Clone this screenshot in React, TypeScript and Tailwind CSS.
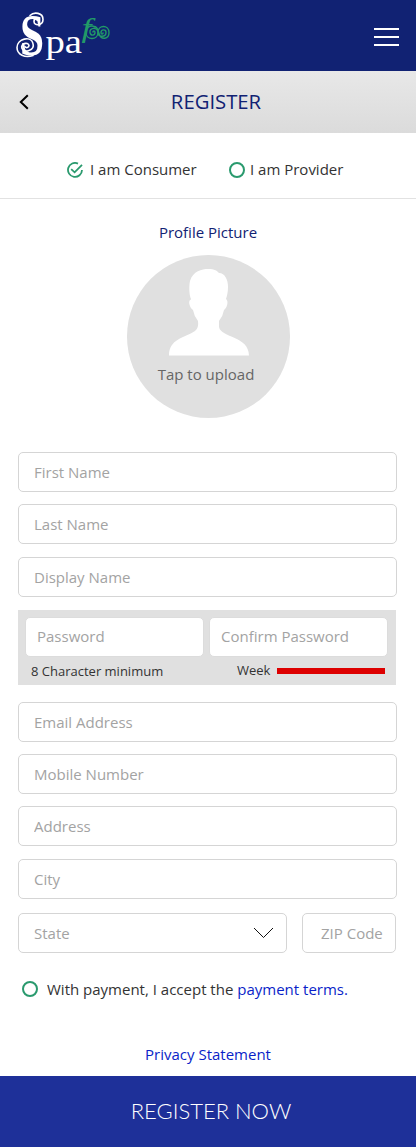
import { useState } from "react";

const FONT = "font-['Open_Sans','Noto_Sans',sans-serif]";

function Logo() {
  return (
    <svg width="100" height="71" viewBox="0 -10 100 71" role="img" aria-label="Spa foo">
      <g fill="#fff" fontFamily="'Liberation Serif', serif">
        <text x="0" y="0" fontSize="54" transform="translate(4 45) scale(0.8 1.1)" fontWeight="700">
          S
        </text>
        <text x="29.5" y="43" fontSize="34" textLength="36.5" lengthAdjust="spacingAndGlyphs">
          pa
        </text>
      </g>
      <g fill="none" stroke="#fff" strokeWidth="1.6" strokeLinecap="round">
        <path d="M14 5.500c4-4 13-3 13 4c0 6-9 7-9 2c0-4 5-4 5-1" />
        <path d="M17 45.500c-8 3-16-1-16-8c0-9 14-12 16-4c2 7-9 10-11 5c-2-5 6-7 7-3c0 2-3 3-4 1" />
      </g>
      <text x="65.500" y="27" fontSize="27" fontStyle="italic" fill="#229a68" fontFamily="'Liberation Serif', serif" textLength="10" lengthAdjust="spacingAndGlyphs">
        f
      </text>
      <g fill="none" stroke="#229a68" strokeWidth="1.4" strokeLinecap="round">
        <path d="M79 17c-5-3-9 1-9 5.500c0 8 12 8 12 0c0-6-9-5-8 0c1 4 5 3 5 0c0-2-2-2-2-0.500" />
        <path d="M78 16.500c4 0 4 4 5 7c2 7 10 6 10-1c0-8-11-8-11 0c0 5 8 5 8 0c0-4-5-3-5 0c0 2 2 2 2 0.500" />
      </g>
    </svg>
  );
}

function Ring() {
  return <span className="size-4 shrink-0 rounded-full border-2 border-[#2a9a6e]" />;
}

function CheckRing() {
  return (
    <svg className="size-4 shrink-0" viewBox="0 0 16 16" fill="none" stroke="#2a9a6e" strokeWidth="1.8">
      <path d="M11 1.6A7 7 0 1 0 15 8" />
      <path d="M4.2 7.2L7.6 10.3L15 2.8" />
    </svg>
  );
}

function Field({ label, className = "px-[15px]" }: { label: string; className?: string }) {
  return (
    <input
      aria-label={label}
      placeholder={label}
      className={`block h-10 rounded-[5px] border bg-white text-[15px] text-[#333] outline-none placeholder:text-[#a3a3a3] placeholder:opacity-100 ${className}`}
    />
  );
}

const WIDE = "w-[379px] border-[#d5d5d5] px-[15px]";
const HALF = "w-[179px] border-[#dcdcdc] px-[11px] pb-[3px]";

export default function App() {
  const [consumer, setConsumer] = useState(true);
  return (
    <div className={`flex h-[1147px] w-[416px] flex-col bg-white text-[15px] text-[#333] ${FONT}`}>
      <header className="flex h-[71px] shrink-0 items-center justify-between bg-[#112273] pr-[17px] pl-4">
        <Logo />
        <button aria-label="Menu" className="mt-[3px] flex w-[25px] flex-col gap-1.5">
          <span className="h-0.5 bg-white" />
          <span className="h-0.5 bg-white" />
          <span className="h-0.5 bg-white" />
        </button>
      </header>

      <div className="grid h-[62px] shrink-0 grid-cols-[48px_1fr_32px] items-center bg-linear-to-b from-[#e8e8e8] to-[#dbdbdb]">
        <button aria-label="Back" className="pl-[19px]">
          <svg width="10" height="16" viewBox="0 0 10 16" fill="none" stroke="#000" strokeWidth="2">
            <path d="M8.8 1.2L1.8 8L8.8 14.8" />
          </svg>
        </button>
        <h1 className="pb-0.5 text-center text-[20.3px] text-[#112273]">REGISTER</h1>
      </div>

      <div className="flex h-[66px] shrink-0 items-center border-b border-[#e2e2e2] pt-2 pl-[67px]">
        <button className="flex w-[162px] items-center gap-[7px]" onClick={() => setConsumer(true)}>
          {consumer ? <CheckRing /> : <Ring />}
          <span>I am Consumer</span>
        </button>
        <button className="flex items-center gap-[5px]" onClick={() => setConsumer(false)}>
          {consumer ? <Ring /> : <CheckRing />}
          <span>I am Provider</span>
        </button>
      </div>

      <section className="flex flex-col items-center pt-[22px]">
        <h2 className="leading-[22px] text-[#112273]">Profile Picture</h2>
        <button className="mt-3 flex size-[163px] flex-col items-center rounded-full bg-[#e0e0e0] pt-3.5">
          <svg width="81" height="87" viewBox="0 0 81 87" fill="#fff">
            <path d="M1 86.500C1 70 16 69 27 62Q31 59 30 52Q26 47 25 41C22 39 20 33 22 31Q23 31 23 30C21 26 21 16 22 12C25 2 34 0 40 0C47 0 49 2 51 4C57 4 60 11 60 18C60 23 59 27 58 30C61 32 59 39 56 41Q55 47 51 52V58C53 69 81 67 81 86.500Z" />
          </svg>
          <span className="mt-[7px] mr-1 leading-[22px] text-[#666]">Tap to upload</span>
        </button>
      </section>

      <form className="flex flex-col px-[18px] pt-[34px]">
        <Field label="First Name" className={WIDE} />
        <Field label="Last Name" className={`mt-3 ${WIDE}`} />
        <Field label="Display Name" className={`mt-[13px] ${WIDE}`} />

        <div className="mt-[13px] h-[75px] w-[378px] bg-[#e0e0e0] px-[7px] pt-[7px]">
          <div className="flex gap-[5px]">
            <Field label="Password" className={HALF} />
            <Field label="Confirm Password" className={HALF} />
          </div>
          <div className="flex h-7 items-center pl-1.5 text-[13px] leading-5">
            <span className="w-[206px]">8 Character minimum</span>
            <span className="mb-0.5 w-10">Week</span>
            <span className="h-1.5 w-[108px] bg-[#dd0000]" />
          </div>
        </div>

        <Field label="Email Address" className={`mt-[17px] ${WIDE}`} />
        <Field label="Mobile Number" className={`mt-3 ${WIDE}`} />
        <Field label="Address" className={`mt-3 ${WIDE}`} />
        <Field label="City" className={`mt-[13px] ${WIDE}`} />

        <div className="mt-3.5 flex gap-[15px]">
          <button type="button" className="flex h-10 w-[269px] items-center justify-between rounded-[5px] border border-[#d5d5d5] pr-3 pl-[15px] text-[#a3a3a3]">
            State
            <svg width="21" height="12" viewBox="0 0 21 12" fill="none" stroke="#111" strokeWidth="1">
              <path d="M1 1L10.5 10.5L20 1" />
            </svg>
          </button>
          <Field label="ZIP Code" className="w-[94px] border-[#d5d5d5] pr-0 pl-[18px]" />
        </div>

        <div className="mt-[25px] ml-1 flex items-center">
          <Ring />
          <p className="ml-[9px] leading-[22px]">
            With payment, I accept the <a className="text-[#0a1fc8]">payment terms.</a>
          </p>
        </div>
      </form>

      <a className="mt-[43px] text-center leading-[22px] text-[#0a1fc8]">Privacy Statement</a>
      <button className="mt-auto h-[71px] shrink-0 bg-[#1e3099] pb-[3px] pl-1.5 font-['Lato','Open_Sans',sans-serif] text-[22px] font-light text-white">
        REGISTER NOW
      </button>
    </div>
  );
}
